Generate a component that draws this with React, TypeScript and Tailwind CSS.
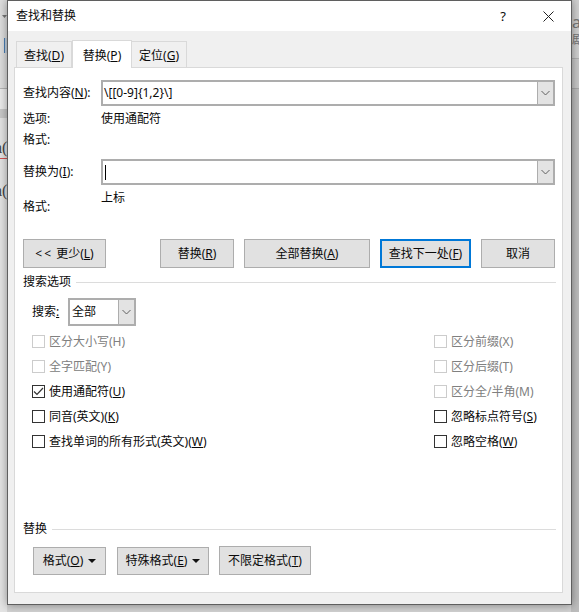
import type { ReactNode } from 'react';

function Key({ children }: { children: ReactNode }) {
  return <u className="underline-offset-1">{children}</u>;
}

function Chevron() {
  return (
    <svg width="9" height="6" viewBox="0 0 9 6" fill="none" aria-hidden="true">
      <path d="M0.5 1 L4.5 5 L8.5 1" stroke="#606060" strokeWidth="1" />
    </svg>
  );
}

function Caret() {
  return (
    <svg width="8" height="4" viewBox="0 0 8 4" aria-hidden="true" className="ml-[5px]">
      <path d="M0 0 H8 L4 4 Z" fill="#111111" />
    </svg>
  );
}

function Tab({ active, width, children }: { active?: boolean; width: string; children: ReactNode }) {
  return (
    <div
      className={
        active
          ? `${width} relative z-10 mb-[-1px] flex h-[28px] items-center justify-center border-x border-t border-[#d9d9d9] bg-white pt-[2px]`
          : `${width} flex h-[26px] items-center justify-center border-t border-r border-[#d9d9d9] pt-[3px] first:border-l`
      }
    >
      {children}
    </div>
  );
}

function ComboBox({ value, caret }: { value?: string; caret?: boolean }) {
  return (
    <div className="flex h-[26px] w-[454px] items-center border-2 border-[#adadad] bg-white">
      <div className="flex flex-1 items-center pl-[1px] text-[12px]">
        {caret ? <span className="ml-[1px] h-[15px] w-px bg-black" /> : value}
      </div>
      <div className="flex h-full w-[16px] items-center justify-center border-l border-[#adadad] bg-[#e3e3e3]">
        <Chevron />
      </div>
    </div>
  );
}

function Btn({ width, primary, children }: { width: string; primary?: boolean; children: ReactNode }) {
  return (
    <div
      className={`${width} flex h-[29px] shrink-0 items-center justify-center bg-[#e1e1e1] ${
        primary ? 'border-2 border-[#0078d7]' : 'border border-[#adadad]'
      }`}
    >
      {children}
    </div>
  );
}

function Check({ label, disabled, checked }: { label: ReactNode; disabled?: boolean; checked?: boolean }) {
  return (
    <div className={`flex h-[25px] items-center ${disabled ? 'text-[#808080]' : ''}`}>
      <span
        className={`mr-[4px] flex size-[13px] items-center justify-center border bg-white ${
          disabled ? 'border-[#cccccc]' : 'border-[#333333]'
        }`}
      >
        {checked ? (
          <svg width="11" height="9" viewBox="0 0 11 9" fill="none" aria-hidden="true">
            <path d="M1 4.5 L4 7.5 L10 1" stroke="#333333" strokeWidth="1.2" />
          </svg>
        ) : null}
      </span>
      {label}
    </div>
  );
}

function GroupTitle({ children }: { children: ReactNode }) {
  return (
    <div className="flex h-[16px] items-center">
      <span>{children}</span>
      <span className="ml-[5px] h-px flex-1 bg-[#dcdcdc]" />
    </div>
  );
}

export default function App() {
  return (
    <div className="relative h-[612px] w-[579px] overflow-hidden bg-[#d2d2d2] font-['Noto_Sans','Noto_Sans_CJK_SC',sans-serif] text-[12px] leading-none text-[#0a0a0a]">
      {/* Word window peeking out behind the dialog */}
      <div className="flex h-full justify-between">
        <div className="flex w-[7px] flex-col bg-[#dcdcdc]">
          <div className="h-[88px] bg-[#dedede] pl-[2px] pt-[15px]">
            <svg width="5" height="3" viewBox="0 0 5 3" aria-hidden="true">
              <path d="M0 0 H5 L2.5 3 Z" fill="#777777" />
            </svg>
            <div className="ml-[2px] mt-[20px] h-[15px] w-[3px] border-l border-[#4a7fb5] bg-[#c4d2e0]" />
          </div>
          <div className="h-px bg-[#b5b5b5]" />
          <div className="h-[20px] bg-[#ececec]" />
          <div className="h-[9px] bg-[#c9c9c9]" />
          <div className="flex-1 overflow-hidden bg-[#e4e4e4] pt-[22px] font-['Liberation_Serif',serif] text-[16px] text-[#444444]">
            <div className="ml-[-5px] border-b border-[#d05050] pb-[2px]">a(</div>
            <div className="ml-[-5px] mt-[24px]">a(</div>
          </div>
        </div>
        <div className="flex w-[8px] flex-col overflow-hidden bg-[#d0d0d0] text-[#777777]">
          <div className="h-[58px] whitespace-nowrap pl-[1px] pt-[14px] text-[16px]">
            a
            <div className="mt-[4px] text-[12px]">剧</div>
          </div>
          <div className="h-px bg-[#b0b0b0]" />
          <div className="h-[29px] bg-[#c8c8c8]" />
          <div className="h-px bg-[#a8a8a8]" />
          <div className="flex-1 bg-[#bdbdbd]" />
        </div>
      </div>

      {/* dialog */}
      <div className="absolute left-[7px] top-0 flex h-[605px] w-[565px] flex-col border border-[#5f5f5f] bg-[#f0f0f0] shadow-[0_0_9px_rgba(0,0,0,0.4)]">
        <div className="flex h-[30px] shrink-0 items-center bg-white pl-[8px]">
          <span className="flex-1 text-[12px]">查找和替换</span>
          <span className="mr-[37px] text-[13px]">?</span>
          <svg width="11" height="11" viewBox="0 0 11 11" className="mr-[17px]" aria-hidden="true">
            <path d="M0.5 0.5 L10.5 10.5 M10.5 0.5 L0.5 10.5" stroke="#222222" strokeWidth="1" />
          </svg>
        </div>

        <div className="flex h-[36px] shrink-0 items-end pl-[8px]">
          <Tab width="w-[56px]">
            <span>
              查找(<Key>D</Key>)
            </span>
          </Tab>
          <Tab active width="w-[60px]">
            <span>
              替换(<Key>P</Key>)
            </span>
          </Tab>
          <Tab width="w-[55px]">
            <span>
              定位(<Key>G</Key>)
            </span>
          </Tab>
        </div>

        <div className="mx-[6px] flex h-[526px] w-[549px] shrink-0 flex-col border border-[#d9d9d9] bg-white pl-[8px] pr-[6px] pt-[12px]">
          <div className="flex items-center">
            <span className="w-[78px]">
              查找内容(<Key>N</Key>):
            </span>
            <ComboBox value="\[[0-9]{1,2}\]" />
          </div>
          <div className="mt-[6px] flex h-[14px] items-center">
            <span className="w-[78px]">选项:</span>
            <span>使用通配符</span>
          </div>
          <div className="mt-[7px] flex h-[14px] items-center">格式:</div>
          <div className="mt-[12px] flex items-center">
            <span className="w-[78px]">
              替换为(<Key>I</Key>):
            </span>
            <ComboBox caret />
          </div>
          <div className="mt-[6px] flex h-[22px] items-end">
            <span className="w-[78px]">格式:</span>
            <span className="mb-[9px]">上标</span>
          </div>

          <div className="mt-[26px] flex">
            <Btn width="w-[83px]">
              <span>
                <span className="tracking-[2px]">&lt;&lt;</span> 更少(<Key>L</Key>)
              </span>
            </Btn>
            <div className="ml-[54px] flex gap-[10px]">
              <Btn width="w-[74px]">
                <span>
                  替换(<Key>R</Key>)
                </span>
              </Btn>
              <Btn width="w-[126px]">
                <span>
                  全部替换(<Key>A</Key>)
                </span>
              </Btn>
              <Btn primary width="w-[91px]">
                <span>
                  查找下一处(<Key>F</Key>)
                </span>
              </Btn>
              <Btn width="w-[74px]">取消</Btn>
            </div>
          </div>

          <div className="mt-[6px]">
            <GroupTitle>搜索选项</GroupTitle>
          </div>

          <div className="ml-[9px] mt-[8px] flex items-center">
            <span className="w-[36px]">
              搜索<u className="underline-offset-1">:</u>
            </span>
            <div className="flex h-[28px] w-[68px] items-center border-2 border-[#adadad] bg-white pl-[2px]">
              <span className="flex-1">全部</span>
              <span className="flex h-full w-[16px] items-center justify-center border-l border-[#adadad] bg-[#e3e3e3]">
                <Chevron />
              </span>
            </div>
          </div>

          <div className="ml-[9px] mt-[3px] flex justify-between pr-[3px]">
            <div className="flex flex-col">
              <Check disabled label="区分大小写(H)" />
              <Check disabled label="全字匹配(Y)" />
              <Check
                checked
                label={
                  <span>
                    使用通配符(<Key>U</Key>)
                  </span>
                }
              />
              <Check
                label={
                  <span>
                    同音(英文)(<Key>K</Key>)
                  </span>
                }
              />
              <Check
                label={
                  <span>
                    查找单词的所有形式(英文)(<Key>W</Key>)
                  </span>
                }
              />
            </div>
            <div className="flex w-[119px] flex-col">
              <Check disabled label="区分前缀(X)" />
              <Check disabled label="区分后缀(T)" />
              <Check disabled label="区分全/半角(M)" />
              <Check
                label={
                  <span>
                    忽略标点符号(<Key>S</Key>)
                  </span>
                }
              />
              <Check
                label={
                  <span>
                    忽略空格(<Key>W</Key>)
                  </span>
                }
              />
            </div>
          </div>

          <div className="mt-[67px]">
            <GroupTitle>替换</GroupTitle>
          </div>

          <div className="ml-[10px] mt-[9px] flex items-start">
            <Btn width="w-[73px] mt-px !h-[28px]">
              <span>
                格式(<Key>O</Key>)
              </span>
              <Caret />
            </Btn>
            <Btn width="w-[92px] ml-[11px] mt-px !h-[28px]">
              <span>
                特殊格式(<Key>E</Key>)
              </span>
              <Caret />
            </Btn>
            <Btn width="w-[92px] ml-[10px]">
              <span>
                不限定格式(<Key>T</Key>)
              </span>
            </Btn>
          </div>
        </div>
      </div>
    </div>
  );
}
